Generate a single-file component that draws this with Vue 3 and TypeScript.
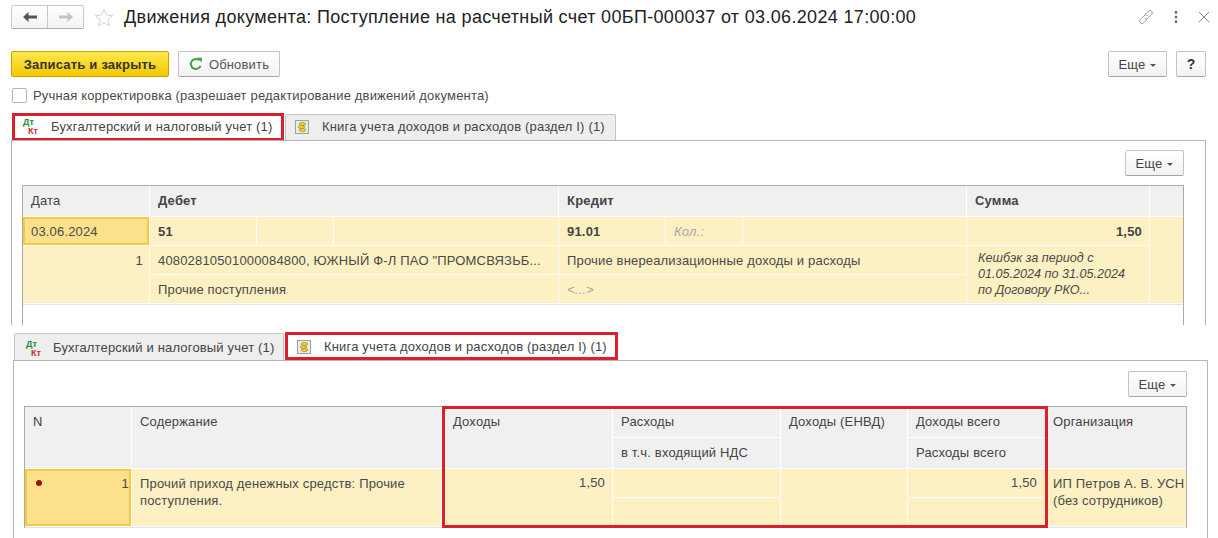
<script setup lang="ts">
const title: string = 'Движения документа: Поступление на расчетный счет 00БП-000037 от 03.06.2024 17:00:00'
</script>

<template>
  <div class="page">
    <section class="top">
      <header class="head">
        <div class="nav">
          <button class="nav-btn back" aria-label="Назад">
            <svg width="16" height="12" viewBox="0 0 16 12"><path d="M1 6 6.500 1v3.400H15v3.200H6.500V11z" fill="#555" /></svg>
          </button>
          <button class="nav-btn fwd" aria-label="Вперед">
            <svg width="16" height="12" viewBox="0 0 16 12"><path d="M15 6 9.500 1v3.400H1v3.200h8.500V11z" fill="#c4c4c4" /></svg>
          </button>
        </div>
        <svg class="star" width="20" height="19" viewBox="0 0 20 19"><path d="M10 1.500l2.500 5.600 6 .6-4.500 4 1.300 6L10 14.600l-5.300 3.100 1.300-6-4.500-4 6-.6z" fill="none" stroke="#d8d8d8" stroke-width="1.100" /></svg>
        <h1 class="title">{{ title }}</h1>
        <div class="win-tools">
          <svg width="16" height="16" viewBox="0 0 16 16" fill="none" stroke="#999" stroke-width="1"><path d="M7 5.500 10.300 2.200a2.300 2.300 0 0 1 3.300 3.300L9.800 9.300a2.300 2.300 0 0 1-3.300 0" /><path d="M9 10.500 5.700 13.800a2.300 2.300 0 0 1-3.300-3.300L6.200 6.700a2.300 2.300 0 0 1 3.300 0" /></svg>
          <svg width="4" height="14" viewBox="0 0 4 14"><path d="M.8 1h2.400v2.400H.8zM.8 5.800h2.400v2.400H.8zM.8 10.600h2.400V13H.8z" fill="#666" /></svg>
          <svg width="12" height="12" viewBox="0 0 12 12"><path d="M1 1l10 10M11 1 1 11" stroke="#888" stroke-width="1" /></svg>
        </div>
      </header>

      <div class="cmd">
        <button class="btn primary">Записать и закрыть</button>
        <button class="btn refresh">
          <svg width="14" height="14" viewBox="0 0 14 14" fill="none"><path d="M11.500 8.800A5 5 0 1 1 10.300 3.300" stroke="#3ca33c" stroke-width="2" /><path d="M8 .8h4.800v4.800z" fill="#3ca33c" /></svg>
          Обновить
        </button>
        <span class="grow"></span>
        <button class="btn more">Еще <i class="caret"></i></button>
        <button class="btn help">?</button>
      </div>

      <label class="check"><span class="box"></span>Ручная корректировка (разрешает редактирование движений документа)</label>

      <div class="tabs tabs-a">
        <div class="tab current">
          <span class="dtkt"><b class="dt">Дт</b><b class="kt">Кт</b></span>
          Бухгалтерский и налоговый учет (1)
          <span class="mark"></span>
        </div>
        <div class="tab other book">
          <svg class="coins" width="14" height="14" viewBox="0 0 14 14"><rect x=".5" y=".5" width="13" height="13" fill="#e9e9ee" stroke="#a0a0a0" /><ellipse cx="7.500" cy="4" rx="3.200" ry="1.500" fill="#f0d23a" stroke="#a5850f" stroke-width=".7" /><ellipse cx="6.500" cy="7" rx="3.200" ry="1.500" fill="#f0d23a" stroke="#a5850f" stroke-width=".7" /><ellipse cx="7.500" cy="10" rx="3.200" ry="1.500" fill="#f0d23a" stroke="#a5850f" stroke-width=".7" /></svg>
          Книга учета доходов и расходов (раздел I) (1)
        </div>
      </div>

      <div class="panel panel-a">
        <div class="panel-bar"><button class="btn more">Еще <i class="caret"></i></button></div>
        <div class="grid grid-a">
          <div class="th c-date">Дата</div>
          <div class="th c-deb strong">Дебет</div>
          <div class="th c-cred strong">Кредит</div>
          <div class="th c-sum strong">Сумма</div>
          <div class="th c-last"></div>

          <div class="td focus c-date">03.06.2024</div>
          <div class="td strong">51</div>
          <div class="td"></div>
          <div class="td"></div>
          <div class="td strong">91.01</div>
          <div class="td hint">Кол.:</div>
          <div class="td"></div>
          <div class="td strong right c-sum sum-val">1,50</div>
          <div class="td c-last tall-3"></div>

          <div class="td right c-date tall-2 row-num">1</div>
          <div class="td c-deb">40802810501000084800, ЮЖНЫЙ Ф-Л ПАО "ПРОМСВЯЗЬБ...</div>
          <div class="td c-cred">Прочие внереализационные доходы и расходы</div>
          <div class="td note c-sum tall-2">Кешбэк за период с<br />01.05.2024 по 31.05.2024<br />по Договору РКО...</div>

          <div class="td c-deb">Прочие поступления</div>
          <div class="td hint c-cred">&lt;...&gt;</div>
          <div class="end"></div>
        </div>
      </div>
    </section>

    <section class="bottom">
      <div class="tabs tabs-b">
        <div class="tab other first">
          <span class="dtkt"><b class="dt">Дт</b><b class="kt">Кт</b></span>
          Бухгалтерский и налоговый учет (1)
        </div>
        <div class="tab current book-b">
          <svg class="coins" width="14" height="14" viewBox="0 0 14 14"><rect x=".5" y=".5" width="13" height="13" fill="#e9e9ee" stroke="#a0a0a0" /><ellipse cx="7.500" cy="4" rx="3.200" ry="1.500" fill="#f0d23a" stroke="#a5850f" stroke-width=".7" /><ellipse cx="6.500" cy="7" rx="3.200" ry="1.500" fill="#f0d23a" stroke="#a5850f" stroke-width=".7" /><ellipse cx="7.500" cy="10" rx="3.200" ry="1.500" fill="#f0d23a" stroke="#a5850f" stroke-width=".7" /></svg>
          Книга учета доходов и расходов (раздел I) (1)
          <span class="mark"></span>
        </div>
      </div>

      <div class="panel panel-b">
        <div class="panel-bar"><button class="btn more">Еще <i class="caret"></i></button></div>
        <div class="grid grid-b">
          <div class="th h2">N</div>
          <div class="th h2">Содержание</div>
          <div class="th h2 th-inc">Доходы</div>
          <div class="th">Расходы</div>
          <div class="th h2">Доходы (ЕНВД)</div>
          <div class="th">Доходы всего</div>
          <div class="th h2 th-org">Организация</div>
          <div class="th c5">в т.ч. входящий НДС</div>
          <div class="th c7">Расходы всего</div>

          <div class="td focus h2 num"><i class="dot"></i><span>1</span></div>
          <div class="td h2 wrap">Прочий приход денежных средств: Прочие поступления.</div>
          <div class="td h2 right low val-a">1,50</div>
          <div class="td"></div>
          <div class="td h2"></div>
          <div class="td right low val-b">1,50</div>
          <div class="td h2 wrap org">ИП Петров А. В. УСН (без сотрудников)</div>
          <div class="td c5"></div>
          <div class="td c7"></div>
          <div class="end"></div>
        </div>
        <span class="mark mark-cols"></span>
      </div>
    </section>
  </div>
</template>

<style>
html, body { margin: 0; background: #fff; }
</style>

<style scoped>
.page {
  width: 1218px;
  height: 538px;
  overflow: hidden;
  background: #fff;
  color: #3d3d3d;
  font: 13px/15px "Liberation Sans", Arial, sans-serif;
  letter-spacing: .17px;
}
button { font: inherit; letter-spacing: inherit; color: inherit; }
.top { height: 325px; overflow: hidden; padding-left: 11px; box-sizing: border-box; }
.head { display: flex; align-items: center; height: 24px; padding-top: 5px; padding-right: 12px; }
.nav { display: flex; width: 73px; height: 24px; box-sizing: border-box; border: 1px solid #c8c8c8; border-bottom-color: #aaa; border-radius: 2px; background: linear-gradient(#fff, #f3f3f3); }
.nav-btn { flex: 1; border: 0; background: none; padding: 0; display: flex; align-items: center; justify-content: center; }
.back { border-right: 1px solid #c8c8c8; }
.star { margin-left: 10px; }
.title { margin: 0 0 0 10px; font-size: 18px; line-height: 24px; font-weight: 400; color: #222; letter-spacing: .33px; white-space: nowrap; }
.win-tools { margin-left: auto; display: flex; align-items: center; gap: 20px; margin-right: -4px; }
.cmd { display: flex; align-items: flex-start; gap: 9px; margin-top: 22px; padding-right: 12px; }
.grow { flex: 1; }
.btn { height: 26px; box-sizing: border-box; border: 1px solid #c4c4c4; border-bottom-color: #a5a5a5; border-radius: 2px; background: linear-gradient(#fff, #f2f2f2); padding: 0; display: inline-flex; align-items: center; justify-content: center; white-space: nowrap; }
.primary { width: 158px; background: linear-gradient(#fee84f, #f5c800); border-color: #c8a600; color: #333; font-weight: 700; letter-spacing: .2px; }
.refresh { width: 102px; gap: 6px; color: #555; }
.more { width: 59px; gap: 5px; color: #444; }
.help { width: 30px; font-weight: 700; font-size: 14px; color: #333; }
.caret { width: 0; height: 0; border: 3px solid transparent; border-top: 3px solid #555; border-bottom: 0; margin-top: 2px; }
.check { display: flex; align-items: center; gap: 6px; margin-top: 10px; margin-left: 1px; height: 16px; color: #4a4a4a; }
.box { width: 13px; height: 13px; border: 1px solid #b5b5b5; border-radius: 2px; background: #fff; flex: none; }
.tabs { display: flex; }
.tabs-a { margin-top: 10px; height: 28px; margin-left: 1px; }
.tabs-a .tab { padding-bottom: 2px; }
.tab { position: relative; display: flex; align-items: center; box-sizing: border-box; white-space: nowrap; color: #444; }
.tab.other { background: #eee; border: 1px solid #c4c4c4; border-bottom: 0; border-radius: 2px 2px 0 0; }
.tabs-a .current { width: 272px; padding-left: 9px; gap: 10px; }
.book { width: 331px; margin-left: 1px; margin-top: 1px; padding-left: 9px; gap: 13px; height: 26px; }
.dtkt { display: inline-block; position: relative; width: 20px; height: 18px; flex: none; letter-spacing: 0; }
.dtkt b { position: absolute; font-size: 9px; line-height: 9px; font-weight: 700; }
.dt { left: 2px; top: 1px; color: #1d8c3a; }
.kt { left: 7px; top: 10px; color: #cf2a2a; }
.mark { position: absolute; inset: 0; border: 3px solid #d9202c; pointer-events: none; }
.panel { position: relative; box-sizing: border-box; border: 1px solid #b5b5b5; border-bottom: 0; }
.panel-a { width: 1195px; height: 190px; margin-top: -1px; padding: 0 21px 0 10px; }
.panel-bar { display: flex; justify-content: flex-end; height: 26px; padding-top: 9px; margin-bottom: 9px; }
.grid { display: grid; gap: 1px; background: #fff; border: 1px solid #aaa; border-bottom: 0; }
.grid-a {
  width: 1162px;
  box-sizing: border-box;
  height: 140px;
  grid-template-columns: 126px 106px 76px 224px 106px 76px 223px 182px 1fr;
  grid-template-rows: 30px 28px 28px 28px 1px;
}
.end { grid-column: 1 / -1; height: 1px; background: #e2e2e2; }
.th { background: #f0f0f0; padding: 7px 8px 0; white-space: nowrap; overflow: hidden; color: #444; }
.td { background: #fdf0c2; padding: 7px 8px 0; white-space: nowrap; overflow: hidden; color: #4a4a4a; }
.strong { font-weight: 700; letter-spacing: .2px; color: #444; }
.right { text-align: right; }
.row-num { padding-right: 6px; }
.sum-val { padding-right: 7px; }
.hint { color: #a5a5a5; font-style: italic; }
.note { font-style: italic; font-size: 12.6px; line-height: 16px; padding: 4px 0 0 11px; letter-spacing: 0; }
.focus { background: #fde08c; box-shadow: inset 0 0 0 2px #f3c93f; }
.c-date { grid-column: 1; }
.c-deb { grid-column: 2 / span 3; }
.c-cred { grid-column: 5 / span 3; }
.c-sum { grid-column: 8; }
.c-last { grid-column: 9; }
.tall-2 { grid-row: span 2; }
.tall-3 { grid-row: span 3; }
.bottom { padding: 8px 0 0 13px; }
.tabs-b { height: 28px; margin-left: 1px; }
.first { width: 270px; height: 27px; padding: 1px 0 0 9px; gap: 9px; }
.book-b { width: 333px; margin-left: 1px; padding: 1px 0 0 12px; gap: 13px; height: 28px; margin-top: -1px; }
.panel-b { width: 1195px; height: 180px; margin-top: -1px; padding: 0 20px 0 10px; }
.panel-b .panel-bar { padding-top: 10px; margin-bottom: 9px; height: 26px; }
.grid-b {
  width: 1163px;
  box-sizing: border-box;
  grid-template-columns: 106px 309px 170px 167px 126px 138px 1fr;
  grid-template-rows: 30px 30px 28px 28px 1px;
}
.h2 { grid-row: span 2; }
.c5 { grid-column: 4; }
.c7 { grid-column: 6; }
.th-inc { padding-left: 11px; }
.th-org { padding-left: 6px; }
.low { padding-top: 6px; }
.val-a { padding-right: 7px; }
.val-b { padding-right: 9px; }
.num { display: flex; justify-content: space-between; align-items: flex-start; padding-right: 2px; }
.dot { width: 6px; height: 6px; margin: 4px 0 0 3px; border-radius: 50%; background: #9c1010; }
.wrap { white-space: normal; padding-top: 6px; line-height: 17px; }
.org { padding-left: 6px; padding-right: 0; }
.mark-cols { inset: auto; left: 428px; top: 45px; width: 606px; height: 122px; box-sizing: border-box; }
</style>
